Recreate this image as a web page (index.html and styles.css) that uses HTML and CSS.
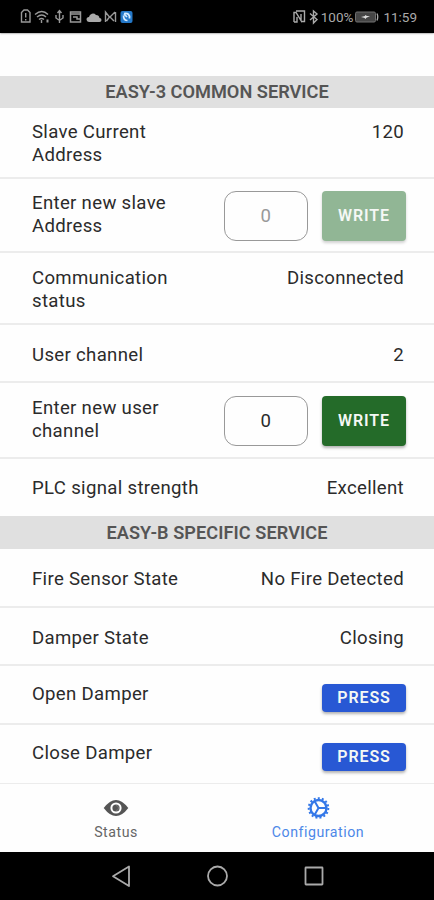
FILE: index.html
```html
<!DOCTYPE html>
<html lang="en">
<head>
<meta charset="utf-8">
<title>Configuration</title>
<link rel="stylesheet" href="styles.css">
</head>
<body>
<div class="statusbar">
  <svg class="sys" width="116" height="18" viewBox="0 0 116 18" fill="none" stroke="#999" stroke-width="1.4">
    <path d="M2.500 4.500L5 2h3.500L11 4.500V14H2.500zM6.700 5v4.500M6.700 11v1.500"/>
    <path d="M16 6.500q7-6 13 0M18 9q5-4 9 0M20 11.500q2.500-2 5 0M22.500 12v3"/>
    <path d="M28.500 11.500v3" stroke-width="2"/>
    <path d="M40.500 3v12M38.500 5l2-2.500 2 2.500M37 7v3l3.500 2.500L44 10V7"/>
    <path d="M51.500 4h10v10h-10zM52 6h9M54 9h4v2h3" stroke-width="1.500"/>
    <path d="M70 14a2.500 2.500 0 0 1 0-5a4 4 0 0 1 7-2a3.500 3.500 0 0 1 3.500 3a2 2 0 0 1 0 4z" fill="#aaa" stroke="none"/>
    <path d="M86.500 14V4l4 5-3 4M96.500 4v10M96 4l-5 5 4 4" stroke-width="1.400"/>
    <rect x="101.500" y="3" width="12" height="12" rx="2" fill="#2478c8" stroke="none"/>
    <path d="M105 5.500q6-1 5.500 5M104.500 7.500q0 5 4 5M105 6l3 3" stroke="#d7ecff" stroke-width="1.700"/>
  </svg>
  <div class="sysright">
    <svg width="29" height="18" viewBox="0 0 29 18" fill="none" stroke="#aaa" stroke-width="1.400">
      <path d="M2 14V4.500h2l5 8V6M4 3h8.500v10.500h-3M2 14h3V9"/>
      <path d="M18 5.500l7 6-3.500 3.500V3L25 6l-7 6"/>
    </svg>
    <span class="pct">100%</span>
    <svg class="battery" width="25" height="18" viewBox="0 0 25 18">
      <rect x="1.500" y="4" width="20" height="10" rx="1.500" fill="#454545" stroke="#707070"/>
      <path d="M23 5.500q1.500 3 0 7" fill="none" stroke="#aaa" stroke-width="1.300"/>
      <path d="M7 9l4-1V7l2 1h3l-4 2v1L10 9.800z" fill="#ddd"/>
    </svg>
    <span class="time">11:59</span>
  </div>
</div>
<main>
  <h2>EASY-3 COMMON SERVICE</h2>
  <div class="row h71"><span class="label">Slave Current<br>Address</span><span class="value">120</span></div>
  <div class="row h74"><span class="label">Enter new slave<br>Address</span><span class="field muted">0</span><button class="write faded">WRITE</button></div>
  <div class="row h72"><span class="label">Communication<br>status</span><span class="value">Disconnected</span></div>
  <div class="row h58"><span class="label">User channel</span><span class="value">2</span></div>
  <div class="row h76"><span class="label">Enter new user<br>channel</span><span class="field">0</span><button class="write">WRITE</button></div>
  <div class="row last"><span class="label">PLC signal strength</span><span class="value">Excellent</span></div>
  <h2 class="second">EASY-B SPECIFIC SERVICE</h2>
  <div class="row"><span class="label">Fire Sensor State</span><span class="value">No Fire Detected</span></div>
  <div class="row h58"><span class="label">Damper State</span><span class="value">Closing</span></div>
  <div class="row action"><span class="label">Open Damper</span><button class="press">PRESS</button></div>
  <div class="row action end"><span class="label">Close Damper</span><button class="press">PRESS</button></div>
</main>
<nav class="tabs">
  <div class="tab">
    <svg width="26" height="26" viewBox="0 0 26 26">
      <path d="M.7 13Q13-3.200 25.300 13Q13 29.200.7 13z" fill="#555"/>
      <circle cx="13" cy="13" r="4.600" fill="#555" stroke="#fff" stroke-width="2"/>
      <path d="M13 10.500a2.500 2.500 0 0 1 0 5" fill="none" stroke="#777"/>
    </svg>
    <span>Status</span>
  </div>
  <div class="tab active">
    <svg width="26" height="26" viewBox="0 0 26 26" fill="none" stroke="#3478e8">
      <circle cx="13.500" cy="13" r="8" stroke-width="2.400"/>
      <circle cx="13.500" cy="13" r="9.800" stroke-width="2" stroke-dasharray="2 2.105"/>
      <path d="M13.500 13h8M13.500 13l-4-7M13.500 13l-4 7" stroke-width="2"/>
    </svg>
    <span>Configuration</span>
  </div>
</nav>
<footer>
  <svg width="434" height="48" viewBox="0 0 434 48" fill="none" stroke="#aaa" stroke-width="1.800" stroke-linejoin="round">
    <path d="M129 14.500v19.500l-16-9.750z"/>
    <circle cx="217.500" cy="24" r="9.500"/>
    <rect x="305.500" y="15.500" width="17" height="17" rx=".5"/>
  </svg>
</footer>
</body>
</html>
```
FILE: styles.css
```css
* { box-sizing: border-box; }
body {
  margin: 0;
  width: 434px;
  height: 900px;
  display: flex;
  flex-direction: column;
  overflow: hidden;
  background: #fefefe;
  color: #2b2b2b;
  font-family: Roboto, sans-serif;
}
.statusbar {
  height: 33px;
  flex: none;
  display: flex;
  align-items: center;
  justify-content: space-between;
  padding: 0 17px 0 19px;
  background: #000;
  color: #aaa;
  box-shadow: 0 0 2px #555;
}
.sysright { display: flex; align-items: center; }
.pct, .time { font-size: 13.5px; line-height: 18px; }
.battery { margin-left: 1px; }
.time { margin-left: 4px; }
main { padding-top: 43px; }
h2 {
  margin: 0;
  height: 32px;
  background: #e0e0e0;
  color: #555;
  font-size: 18.2px;
  line-height: 32px;
  font-weight: 600;
  text-align: center;
}
.second { height: 33px; line-height: 34px; font-size: 18.1px; letter-spacing: .08px; }
.row {
  height: 59px;
  display: flex;
  align-items: flex-start;
  padding: 19px 28px 0 32px;
  border-bottom: 2px solid #ececec;
  font-size: 18.6px;
  line-height: 23px;
  letter-spacing: .32px;
}
.label { flex: 1; white-space: nowrap; }
.value { margin-right: 2px; }
.h71 { height: 71px; padding-top: 13px; }
.h74 { height: 74px; padding-top: 13px; }
.h72 { height: 72px; padding-top: 14px; }
.h58 { height: 58px; }
.h76 { height: 76px; padding-top: 14px; }
.last { height: 57px; padding-top: 18px; border-bottom: 0; }
.action { padding-top: 17px; }
.end { height: 58px; border-bottom: 0; }
.field {
  width: 84px;
  height: 50px;
  margin-top: -1px;
  margin-right: 14px;
  border: 1px solid #999;
  border-radius: 12px;
  line-height: 49px;
  text-align: center;
}
.muted { color: #999; }
button {
  width: 84px;
  border: 0;
  border-radius: 4px;
  padding: 0;
  color: #f5f8f5;
  font: 600 16px/1 Roboto, sans-serif;
  letter-spacing: .9px;
  box-shadow: 0 2px 3px rgba(0, 0, 0, .3);
}
.write { height: 50px; margin-top: -1px; background: #246b29; }
.faded { background: #91b695; box-shadow: 0 2px 3px rgba(0, 0, 0, .18); }
.press { height: 28px; margin-top: 1px; background: #2858d4; }
.tabs {
  height: 69px;
  flex: none;
  display: flex;
  padding: 0 15px;
  border-top: 1px solid #ececec;
}
.tab {
  flex: 1;
  display: flex;
  flex-direction: column;
  align-items: center;
  padding-top: 11px;
  color: #666;
  font-size: 14.2px;
  line-height: 20px;
  letter-spacing: .52px;
}
.tab span { margin-top: 1px; }
.active { color: #4d88e8; }
footer { flex: 1; background: #000; }
footer svg { display: block; }
```
